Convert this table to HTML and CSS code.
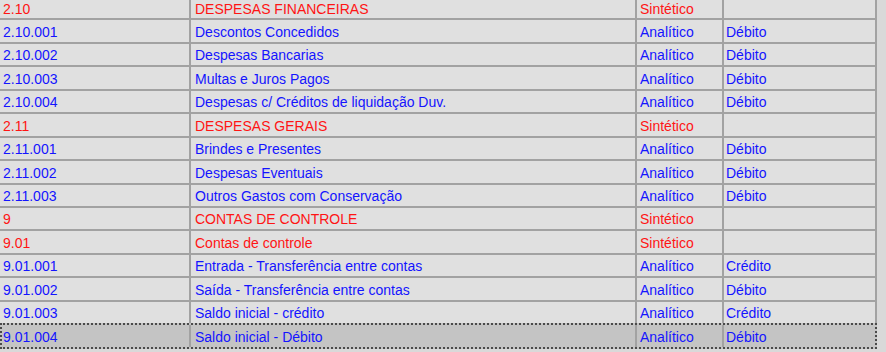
FILE: index.html
```html
<!DOCTYPE html>
<html lang="pt">
<head>
<meta charset="utf-8">
<title>Plano de contas</title>
<link rel="stylesheet" href="styles.css">
</head>
<body>
<div class="grid">
  <div class="row syn"><div class="c c1">2.10</div><div class="c c2">DESPESAS FINANCEIRAS</div><div class="c c3">Sintético</div><div class="c c4"></div></div>
  <div class="row ana"><div class="c c1">2.10.001</div><div class="c c2">Descontos Concedidos</div><div class="c c3">Analítico</div><div class="c c4">Débito</div></div>
  <div class="row ana"><div class="c c1">2.10.002</div><div class="c c2">Despesas Bancarias</div><div class="c c3">Analítico</div><div class="c c4">Débito</div></div>
  <div class="row ana"><div class="c c1">2.10.003</div><div class="c c2">Multas e Juros Pagos</div><div class="c c3">Analítico</div><div class="c c4">Débito</div></div>
  <div class="row ana"><div class="c c1">2.10.004</div><div class="c c2">Despesas c/ Créditos de liquidação Duv.</div><div class="c c3">Analítico</div><div class="c c4">Débito</div></div>
  <div class="row syn"><div class="c c1">2.11</div><div class="c c2">DESPESAS GERAIS</div><div class="c c3">Sintético</div><div class="c c4"></div></div>
  <div class="row ana"><div class="c c1">2.11.001</div><div class="c c2">Brindes e Presentes</div><div class="c c3">Analítico</div><div class="c c4">Débito</div></div>
  <div class="row ana"><div class="c c1">2.11.002</div><div class="c c2">Despesas Eventuais</div><div class="c c3">Analítico</div><div class="c c4">Débito</div></div>
  <div class="row ana"><div class="c c1">2.11.003</div><div class="c c2">Outros Gastos com Conservação</div><div class="c c3">Analítico</div><div class="c c4">Débito</div></div>
  <div class="row syn"><div class="c c1">9</div><div class="c c2">CONTAS DE CONTROLE</div><div class="c c3">Sintético</div><div class="c c4"></div></div>
  <div class="row syn"><div class="c c1">9.01</div><div class="c c2">Contas de controle</div><div class="c c3">Sintético</div><div class="c c4"></div></div>
  <div class="row ana"><div class="c c1">9.01.001</div><div class="c c2">Entrada - Transferência entre contas</div><div class="c c3">Analítico</div><div class="c c4">Crédito</div></div>
  <div class="row ana"><div class="c c1">9.01.002</div><div class="c c2">Saída - Transferência entre contas</div><div class="c c3">Analítico</div><div class="c c4">Débito</div></div>
  <div class="row ana"><div class="c c1">9.01.003</div><div class="c c2">Saldo inicial - crédito</div><div class="c c3">Analítico</div><div class="c c4">Crédito</div></div>
  <div class="row ana sel"><div class="c c1">9.01.004</div><div class="c c2">Saldo inicial - Débito</div><div class="c c3">Analítico</div><div class="c c4">Débito</div></div>
</div>
</body>
</html>
```

FILE: styles.css
```css
html, body {
  margin: 0;
  padding: 0;
  background: #d9d9d9;
  overflow: hidden;
}
body {
  width: 886px;
  height: 352px;
  font-family: "Liberation Sans", Arial, sans-serif;
  font-size: 14px;
}
.grid {
  width: 877px;
  margin-top: -3px;
  display: flex;
  flex-direction: column;
}
.row {
  display: flex;
  height: 23.45px;
  box-sizing: border-box;
  border-bottom: 2px solid #a2a2a2;
  background: #e0e0e0;
}
.c {
  box-sizing: border-box;
  border-right: 2px solid #a2a2a2;
  padding: 2.5px 0 0 4px;
  line-height: 18.95px;
  white-space: nowrap;
  overflow: hidden;
}
.c1 { width: 191px; padding-left: 3px; }
.c2 { width: 446px; }
.c3 { width: 87px; padding-left: 3px; }
.c4 { width: 153px; padding-left: 2px; }
.syn { color: #ff1414; }
.ana { color: #1414ff; }
.row.sel {
  background: #c4c4c4;
  border: 2px dotted #4a4a4a;
  margin-top: -2px;
  height: 25.45px;
}
.row.sel .c1 { width: 189px; padding-left: 1px; }
.row.sel .c4 { width: 151px; border-right: none; }
```
